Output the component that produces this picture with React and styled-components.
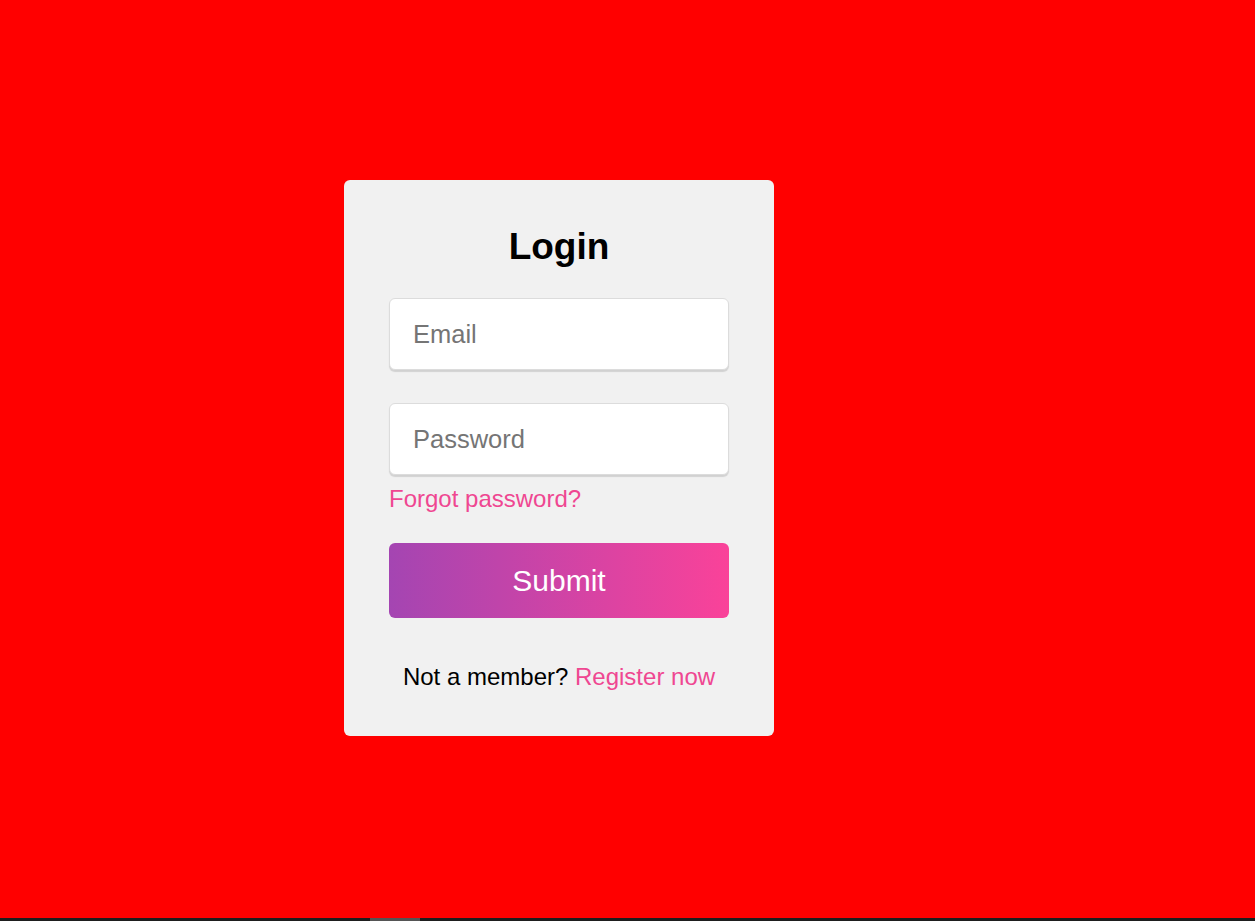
import styled, {createGlobalStyle} from 'styled-components'

const GlobalStyle = createGlobalStyle`
  html, body {
    margin: 0;
    padding: 0;
    background: #1e1e1e;
    font-family: Arial, "Liberation Sans", sans-serif;
    overflow: hidden;
  }
`

export default function App() {
  return (
    <>
      <GlobalStyle/>
      <Page>
        <Card>
          <Title>Login</Title>
          <Input type="text" placeholder="Email" $gap={30}/>
          <Input type="password" placeholder="Password" $gap={33}/>
          <Link href="#">Forgot password?</Link>
          <Button>Submit</Button>
          <Footer>Not a member? <Register href="#">Register now</Register></Footer>
        </Card>
      </Page>
      <ScrollStrip>
        <Thumb/>
      </ScrollStrip>
    </>
  )
}

const Page = styled.div`
  height: 918px;
  background: #ff0000;
  display: flex;
  align-items: flex-start;
  padding: 180px 0 0 344px;
  box-sizing: border-box;
`

const Card = styled.form`
  width: 430px;
  box-sizing: border-box;
  padding: 45px;
  background: #f1f1f1;
  border-radius: 6px;
  display: flex;
  flex-direction: column;
`

const Title = styled.h1`
  margin: 0;
  padding-top: 1px;
  font-size: 37px;
  line-height: 42px;
  font-weight: 700;
  text-align: center;
  color: #000;
`

const Input = styled.input`
  margin-top: ${p => p.$gap || 31}px;
  height: 72px;
  box-sizing: border-box;
  border: 1px solid #dcdcdc;
  border-radius: 6px;
  box-shadow: 0 2px 1px rgba(0, 0, 0, 0.13);
  background: #fff;
  padding: 0 23px;
  font-family: inherit;
  font-size: 25.5px;
  outline: none;

  ::placeholder {
    color: #757575;
  }
`

const Link = styled.a`
  margin-top: 10px;
  font-size: 24px;
  line-height: 28px;
  color: #ef4791;
  text-decoration: none;
  align-self: flex-start;
`

const Button = styled.button`
  margin-top: 30px;
  height: 75px;
  border: 0;
  border-radius: 6px;
  background: linear-gradient(to right, #a445b2, #fa4299);
  color: #fff;
  font-family: inherit;
  font-size: 30px;
  cursor: pointer;
`

const Footer = styled.div`
  margin-top: 45px;
  font-size: 24px;
  line-height: 28px;
  text-align: center;
  color: #000;
`

const Register = styled.a`
  color: #ef4791;
  text-decoration: none;
`

const ScrollStrip = styled.div`
  height: 3px;
  background: #1e1e1e;
  display: flex;
`

const Thumb = styled.div`
  margin-left: 370px;
  width: 50px;
  background: #555;
`
